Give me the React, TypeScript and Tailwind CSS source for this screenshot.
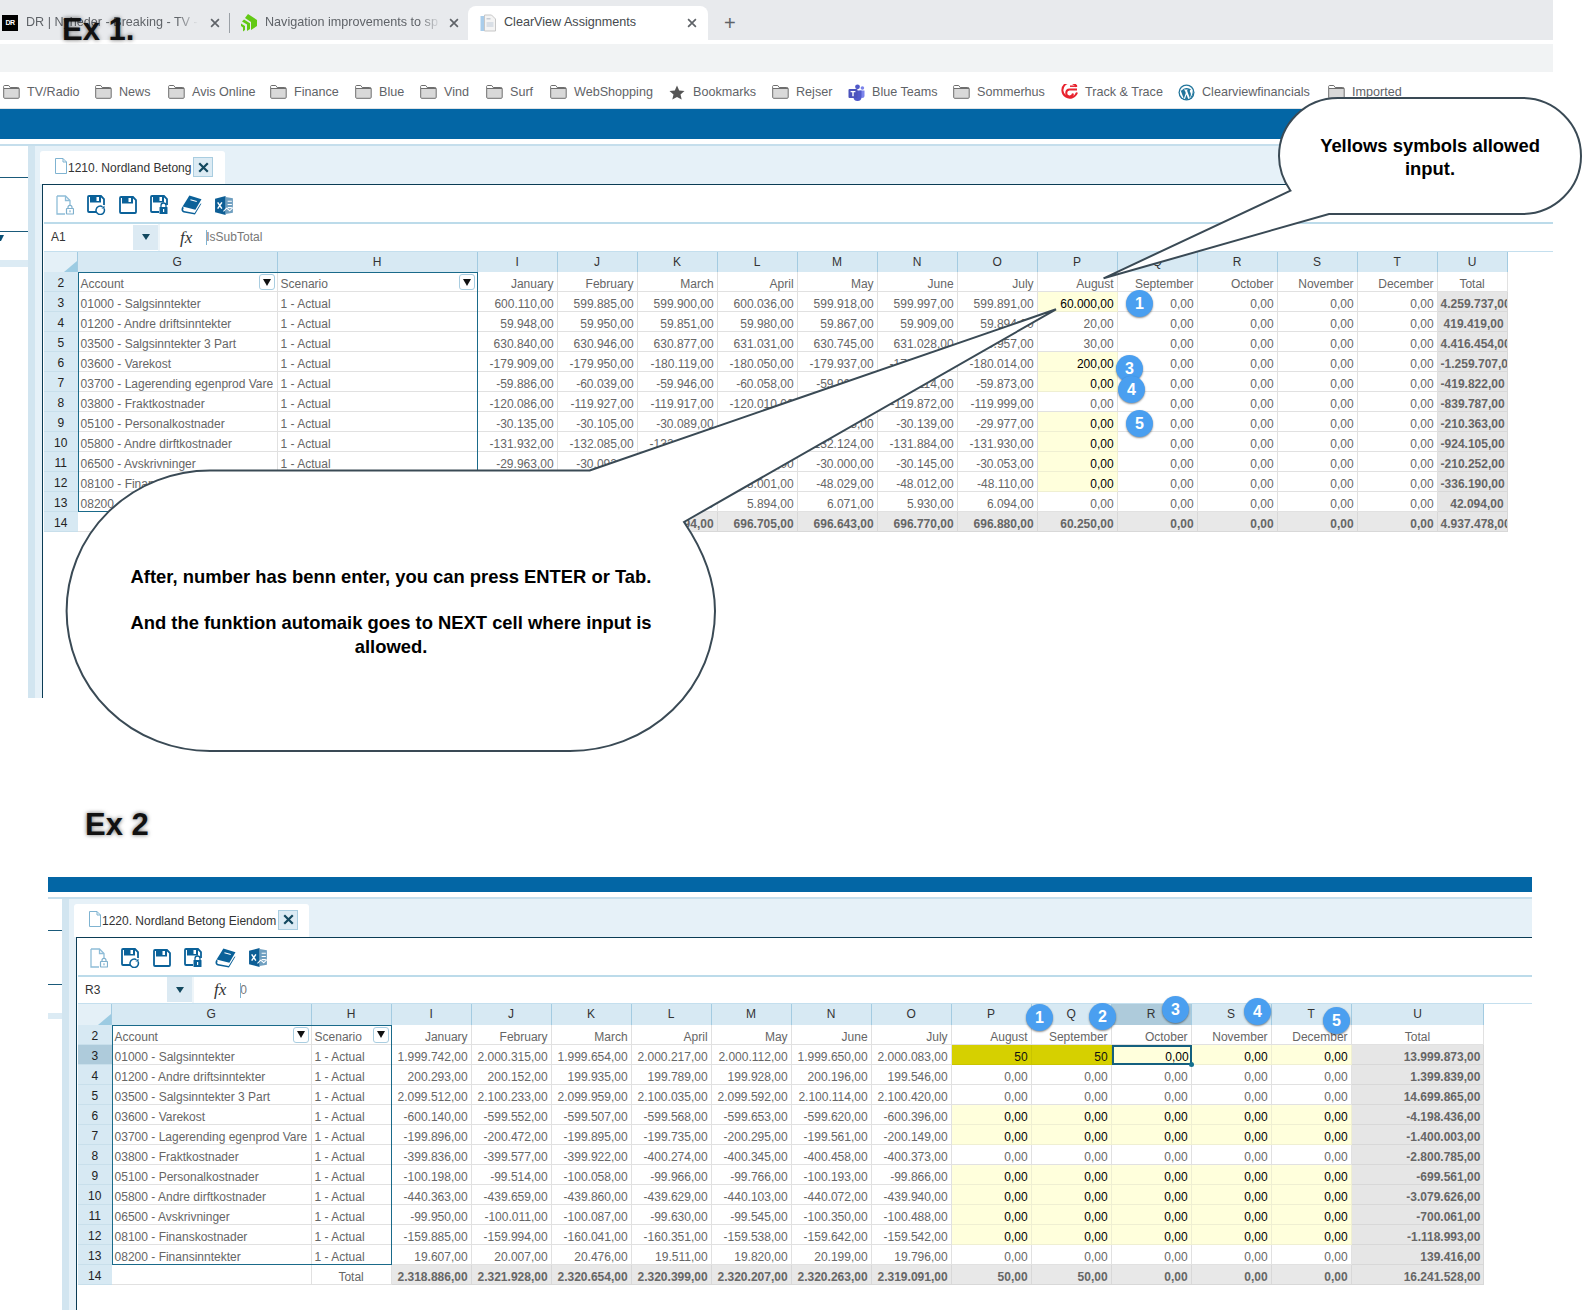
import React from "react";

const BLUE = "#0a6199";

function Folder() {
  return (
    <svg width="17" height="14" viewBox="0 0 17 14" className="shrink-0">
      <path d="M.7 1.5a1 1 0 0 1 1-1h4l1.5 2h7.6a1.4 1.4 0 0 1 1.4 1.4v8.4a1 1 0 0 1-1 1H1.7a1 1 0 0 1-1-1z" fill="#d9d9d9" stroke="#6e6e6e" strokeWidth="1" />
      <path d="M1 3.5h15" stroke="#6e6e6e" strokeWidth="1" />
      <path d="M1.2 1h4.4l1.2 2H1.2z" fill="#fff" />
    </svg>
  );
}
function Star() {
  return (
    <svg width="16" height="15" viewBox="0 0 16 15" className="shrink-0">
      <path d="M8 .5l2.2 4.9 5.3.5-4 3.5 1.2 5.2L8 11.9 3.3 14.6l1.2-5.2-4-3.5 5.3-.5z" fill="#555" />
    </svg>
  );
}
function Teams() {
  return (
    <svg width="17" height="17" viewBox="0 0 17 17" className="shrink-0">
      <circle cx="9.5" cy="2.8" r="2.4" fill="#5059c9" />
      <circle cx="14.4" cy="4" r="1.8" fill="#7b83eb" />
      <path d="M11.5 6.5h5v5a2.5 2.5 0 0 1-5 0z" fill="#7b83eb" />
      <path d="M5.5 6.5h8v6.5a3.6 3.6 0 0 1-8 0z" fill="#5059c9" />
      <rect x=".5" y="5" width="9" height="9" rx="1" fill="#4b53bc" />
      <path d="M2.6 7h4.8v1.2H5.700v4H4.300v-4H2.600z" fill="#fff" />
    </svg>
  );
}
function TrackIcon() {
  return (
    <svg width="17" height="17" viewBox="0 0 17 17" className="shrink-0" fill="none" stroke="#e8232f">
      <path d="M15.600 2.800A7.500 7.500 0 1 0 16 8.500" strokeWidth="2" />
      <path d="M16 5.600H8.500A3.400 3.400 0 1 0 12 9.500" strokeWidth="2" />
      <path d="M16 2.200H9" strokeWidth="1.500" />
    </svg>
  );
}
function WpIcon() {
  return (
    <svg width="17" height="17" viewBox="0 0 17 17" className="shrink-0">
      <circle cx="8.500" cy="8.500" r="8" fill="#21759b" />
      <circle cx="8.500" cy="8.500" r="6.700" fill="#fff" />
      <path d="M2.600 6.300l3.200 8.500 2-5.700-1-2.800h-.9v-.7h3.800v.7h-.8l3 8 .9-3c.5-1.600-.6-2.800-.9-3.700-.3-.8.200-1.800 1.300-1.800a6.500 6.500 0 0 0-9.600.8z" fill="#21759b" />
      <path d="M8.500 10.400l-1.700 5a6.500 6.500 0 0 0 3.500-.1zM14.300 5.700c.6 1.500.5 3.500-.4 5.300l-1.800 3.500a6.500 6.500 0 0 0 2.200-8.800z" fill="#21759b" />
    </svg>
  );
}
function GreenIcon() {
  return (
    <svg width="17" height="18" viewBox="0 0 17 18" className="shrink-0" fill="#62c914">
      <path d="M7 0l9 6v6l-6 4v-8L4 4z" />
      <path d="M3 5.500l6 3.700v5.800l-3 2v-6.500L1 7.500z" />
      <path d="M0 9.500l4 2.500v4l-2 1.500v-4L0 12z" />
    </svg>
  );
}
function CvIcon() {
  return (
    <svg width="17" height="18" viewBox="0 0 17 18" className="shrink-0">
      <rect x=".5" y="2" width="4" height="15" fill="#a9cdeb" />
      <path d="M4.500 1h7l4 4v12h-11z" fill="#f4f4f4" stroke="#c7c7c7" />
      <rect x="6.500" y="8" width="7" height="5" fill="#d9dfe6" />
      <rect x="6.500" y="4" width="4" height="1.500" fill="#c7ccd3" />
    </svg>
  );
}
function DocSmall() {
  return (
    <svg width="12" height="16" viewBox="0 0 12 16" className="shrink-0">
      <path d="M.5.500h7.500l3.500 3.500v11.500H.5z" fill="#fff" stroke="#7fb3d1" />
      <path d="M8 .5v3.500h3.500" fill="none" stroke="#7fb3d1" />
    </svg>
  );
}

function DocLockIcon() {
  return (
    <svg width="18" height="20" viewBox="0 0 18 20" fill="none">
      <path d="M1 1h8.500l4.500 4.500V11M9 19H1V1" stroke="#8fbdd8" strokeWidth="1.300" />
      <path d="M9.500 1v4.500H14" stroke="#8fbdd8" strokeWidth="1.300" />
      <path d="M12 13.500v-1.200a2 2 0 0 1 4 0v1.200" stroke="#7fb0cd" strokeWidth="1.200" />
      <rect x="10.500" y="13.500" width="7" height="5.500" rx=".5" stroke="#7fb0cd" strokeWidth="1.200" />
      <rect x="13.400" y="15.300" width="1.200" height="2" fill="#7fb0cd" />
    </svg>
  );
}
function Floppy({ cut }: { cut?: boolean }) {
  return (
    <>
      <path d={cut ? "M9 17H2a1 1 0 0 1-1-1V2a1 1 0 0 1 1-1h12l3 3v6" : "M2 1h12l3 3v12a1 1 0 0 1-1 1H2a1 1 0 0 1-1-1V2a1 1 0 0 1 1-1z"} stroke={BLUE} strokeWidth="1.800" fill="#fff" />
      <path d="M3 1h11v6.500H3z" fill={BLUE} />
      <rect x="9.500" y="2" width="2.500" height="4" fill="#fff" />
    </>
  );
}
function SaveIcon() {
  return (
    <svg width="18" height="18" viewBox="0 0 18 18" fill="none">
      <Floppy />
    </svg>
  );
}
function SaveReloadIcon() {
  return (
    <svg width="19" height="20" viewBox="0 0 19 20" fill="none">
      <Floppy cut />
      <path d="M17 13.500a4.200 4.200 0 1 1-1.500-1.700" stroke={BLUE} strokeWidth="1.500" />
      <path d="M17.500 10.500v3h-3z" fill={BLUE} />
    </svg>
  );
}
function SaveLockIcon() {
  return (
    <svg width="18" height="20" viewBox="0 0 18 20" fill="none">
      <Floppy cut />
      <path d="M11 12v-1.500a2.500 2.500 0 0 1 5 0V12" stroke={BLUE} strokeWidth="1.300" />
      <rect x="9.500" y="12" width="8" height="7" rx=".6" fill={BLUE} />
      <rect x="13" y="14" width="1.200" height="3" fill="#fff" />
    </svg>
  );
}
function BookIcon() {
  return (
    <svg width="21" height="20" viewBox="0 0 20 19" fill="none">
      <path d="M8 .5l11.500 3.500-5.800 10L1.500 11z" fill={BLUE} />
      <path d="M1.500 11c-1.700 2.300-1.300 5 1 5.600l10.800 2 6.200-10.600-1 .2-5.500 8.900-10-1.900c-1.200-.3-1.200-1.800-.3-2.900z" fill={BLUE} />
      <path d="M9 4.500l6 1.700" stroke="#fff" strokeWidth="1" />
    </svg>
  );
}
function ExcelIcon() {
  return (
    <svg width="19" height="21" viewBox="0 0 18 20" fill="none">
      <path d="M10 2l7 1v14l-7 1z" fill="#6f9fc0" />
      <path d="M0 3.500L10 1v18L0 16.500z" fill="#0d5e95" />
      <path d="M12 6h4M12 9h4M12 12h4" stroke="#fff" strokeWidth="1" />
      <path d="M2.500 7l4 6M6.500 7l-4 6" stroke="#fff" strokeWidth="1.400" />
      <path d="M8 15.500l3-3 3 2.500 3-3" stroke="#fff" strokeWidth="1" />
    </svg>
  );
}

function FilterBtn() {
  return (
    <span className="absolute right-[2px] top-[2px] flex h-4 w-4 items-center justify-center rounded-[3px] border border-[#a9cde0] bg-white">
      <svg width="8" height="7" viewBox="0 0 8 7">
        <path d="M0 0h8L4 7z" fill="#111" />
      </svg>
    </span>
  );
}

function CloseX({ tone, size = 10, weight = 1.5 }: { tone: string; size?: number; weight?: number }) {
  return (
    <svg width={size} height={size} viewBox="0 0 9 9" className="shrink-0">
      <path d="M1 1l7 7M8 1L1 8" stroke={tone} strokeWidth={weight} />
    </svg>
  );
}

type Col = { l: string; w: string };
type Row = { n: number; a: string; s: string; v: string[]; t: string };

const ACT = "1 - Actual";
const COLS1: Col[] = [
  { l: "G", w: "w-[200px]" },
  { l: "H", w: "w-[200px]" },
  ...["I", "J", "K", "L", "M", "N", "O", "P", "Q", "R", "S", "T"].map((l) => ({ l, w: "w-[80px]" })),
  { l: "U", w: "w-[70px]" },
];
const COLS2: Col[] = [
  { l: "G", w: "w-[200px]" },
  { l: "H", w: "w-[80px]" },
  ...["I", "J", "K", "L", "M", "N", "O", "P", "Q", "R", "S", "T"].map((l) => ({ l, w: "w-[80px]" })),
  { l: "U", w: "w-[132.800px]" },
];
const MONTHS = ["January", "February", "March", "April", "May", "June", "July", "August", "September", "October", "November", "December"];

const Z = ["0,00", "0,00", "0,00", "0,00"];
const Z5 = ["0,00", "0,00", "0,00", "0,00", "0,00"];

const ROWS1: Row[] = [
  { n: 3, a: "01000 - Salgsinntekter", s: ACT, v: ["600.110,00", "599.885,00", "599.900,00", "600.036,00", "599.918,00", "599.997,00", "599.891,00", "60.000,00", ...Z], t: "4.259.737,00" },
  { n: 4, a: "01200 - Andre driftsinntekter", s: ACT, v: ["59.948,00", "59.950,00", "59.851,00", "59.980,00", "59.867,00", "59.909,00", "59.894,00", "20,00", ...Z], t: "419.419,00" },
  { n: 5, a: "03500 - Salgsinntekter 3 Part", s: ACT, v: ["630.840,00", "630.946,00", "630.877,00", "631.031,00", "630.745,00", "631.028,00", "630.957,00", "30,00", ...Z], t: "4.416.454,00" },
  { n: 6, a: "03600 - Varekost", s: ACT, v: ["-179.909,00", "-179.950,00", "-180.119,00", "-180.050,00", "-179.937,00", "-179.728,00", "-180.014,00", "200,00", ...Z], t: "-1.259.707,00" },
  { n: 7, a: "03700 - Lagerending egenprod Vare", s: ACT, v: ["-59.886,00", "-60.039,00", "-59.946,00", "-60.058,00", "-59.906,00", "-60.114,00", "-59.873,00", "0,00", ...Z], t: "-419.822,00" },
  { n: 8, a: "03800 - Fraktkostnader", s: ACT, v: ["-120.086,00", "-119.927,00", "-119.917,00", "-120.010,00", "-119.976,00", "-119.872,00", "-119.999,00", "0,00", ...Z], t: "-839.787,00" },
  { n: 9, a: "05100 - Personalkostnader", s: ACT, v: ["-30.135,00", "-30.105,00", "-30.089,00", "-29.985,00", "-29.933,00", "-30.139,00", "-29.977,00", "0,00", ...Z], t: "-210.363,00" },
  { n: 10, a: "05800 - Andre dirftkostnader", s: ACT, v: ["-131.932,00", "-132.085,00", "-132.120,00", "-132.030,00", "-132.124,00", "-131.884,00", "-131.930,00", "0,00", ...Z], t: "-924.105,00" },
  { n: 11, a: "06500 - Avskrivninger", s: ACT, v: ["-29.963,00", "-30.092,00", "-29.999,00", "-30.000,00", "-30.000,00", "-30.145,00", "-30.053,00", "0,00", ...Z], t: "-210.252,00" },
  { n: 12, a: "08100 - Finanskostnader", s: ACT, v: ["-47.900,00", "-48.050,00", "-48.098,00", "-48.001,00", "-48.029,00", "-48.012,00", "-48.110,00", "0,00", ...Z], t: "-336.190,00" },
  { n: 13, a: "08200 - Finansinntekter", s: ACT, v: ["6.010,00", "5.990,00", "6.105,00", "5.894,00", "6.071,00", "5.930,00", "6.094,00", "0,00", ...Z], t: "42.094,00" },
];
const TOTAL1 = ["696.420,00", "696.512,00", "696.694,00", "696.705,00", "696.643,00", "696.770,00", "696.880,00", "60.250,00", "0,00", "0,00", "0,00", "0,00"];

const r2 = (n: number, a: string, v: string[], t: string): Row => ({ n, a, s: ACT, v: [...v.map((x) => x + ",00"), ...Z5], t: t + ",00" });
const ROWS2: Row[] = [
  { n: 3, a: "01000 - Salgsinntekter", s: ACT, v: ["1.999.742,00", "2.000.315,00", "1.999.654,00", "2.000.217,00", "2.000.112,00", "1.999.650,00", "2.000.083,00", "50", "50", "0,00", "0,00", "0,00"], t: "13.999.873,00" },
  r2(4, "01200 - Andre driftsinntekter", ["200.293", "200.152", "199.935", "199.789", "199.928", "200.196", "199.546"], "1.399.839"),
  r2(5, "03500 - Salgsinntekter 3 Part", ["2.099.512", "2.100.233", "2.099.959", "2.100.035", "2.099.592", "2.100.114", "2.100.420"], "14.699.865"),
  r2(6, "03600 - Varekost", ["-600.140", "-599.552", "-599.507", "-599.568", "-599.653", "-599.620", "-600.396"], "-4.198.436"),
  r2(7, "03700 - Lagerending egenprod Vare", ["-199.896", "-200.472", "-199.895", "-199.735", "-200.295", "-199.561", "-200.149"], "-1.400.003"),
  r2(8, "03800 - Fraktkostnader", ["-399.836", "-399.577", "-399.922", "-400.274", "-400.345", "-400.458", "-400.373"], "-2.800.785"),
  r2(9, "05100 - Personalkostnader", ["-100.198", "-99.514", "-100.058", "-99.966", "-99.766", "-100.193", "-99.866"], "-699.561"),
  r2(10, "05800 - Andre dirftkostnader", ["-440.363", "-439.659", "-439.860", "-439.629", "-440.103", "-440.072", "-439.940"], "-3.079.626"),
  r2(11, "06500 - Avskrivninger", ["-99.950", "-100.011", "-100.087", "-99.630", "-99.545", "-100.350", "-100.488"], "-700.061"),
  r2(12, "08100 - Finanskostnader", ["-159.885", "-159.994", "-160.041", "-160.351", "-159.538", "-159.642", "-159.542"], "-1.118.993"),
  r2(13, "08200 - Finansinntekter", ["19.607", "20.007", "20.476", "19.511", "19.820", "20.199", "19.796"], "139.416"),
];
const TOTAL2 = ["2.318.886,00", "2.321.928,00", "2.320.654,00", "2.320.399,00", "2.320.207,00", "2.320.263,00", "2.319.091,00", "50,00", "50,00", "0,00", "0,00", "0,00"];

const YELLOW_ROWS = [3, 6, 7, 9, 10, 11, 12];
const CELL = "h-5 shrink-0 overflow-hidden whitespace-nowrap border-r border-b px-[3px] leading-[24px] box-border";

function Grid({ cols, rows, total, yellowCols, selected, frameW, hTotal, grandTotal }: {
  cols: Col[]; rows: Row[]; total: string[]; yellowCols: number[]; selected?: boolean; frameW: string; hTotal?: boolean; grandTotal: string;
}) {
  const rowHead = "flex h-5 w-[33.600px] shrink-0 items-start justify-center pt-[2px] leading-[18px] text-[#222] border-b border-[#c8dfeb]";
  return (
    <div className="relative text-[12px] text-[#666]">
      <div className="flex h-[20.500px]">
        <div className="relative w-[33.600px] shrink-0 border-r border-[#a3cbe1] bg-[#e4f0f7]">
          <svg width="13" height="11" viewBox="0 0 13 11" className="absolute right-0 bottom-0">
            <path d="M13 0v11H0z" fill="#9ccbe2" />
          </svg>
        </div>
        {cols.map((c) => (
          <div key={c.l} className={`${c.w} flex shrink-0 items-center justify-center border-r border-[#a3cbe1] text-[#333] ${selected && c.l === "R" ? "bg-[#aecbdb]" : "bg-[#d7e9f3]"}`}>
            {c.l}
          </div>
        ))}
      </div>
      <div className="flex h-5">
        <div className={`${rowHead} bg-[#d7e9f3]`}>2</div>
        <div className={`${CELL} ${cols[0].w} relative border-[#e1e1e1]`}>Account<FilterBtn /></div>
        <div className={`${CELL} ${cols[1].w} relative border-[#e1e1e1]`}>Scenario<FilterBtn /></div>
        {MONTHS.map((m) => (
          <div key={m} className={`${CELL} w-[80px] border-[#e1e1e1] text-right`}>{m}</div>
        ))}
        <div className={`${CELL} ${cols[14].w} border-[#e1e1e1] text-center`}>Total</div>
      </div>
      {rows.map((r) => (
        <div key={r.n} className="flex h-5">
          <div className={`${rowHead} ${selected && r.n === 3 ? "bg-[#aecbdb]" : "bg-[#d7e9f3]"}`}>{r.n}</div>
          <div className={`${CELL} ${cols[0].w} border-[#e1e1e1]`}>{r.a}</div>
          <div className={`${CELL} ${cols[1].w} border-[#e1e1e1]`}>{r.s}</div>
          {r.v.map((x, i) => {
            const y = YELLOW_ROWS.includes(r.n) && yellowCols.includes(i);
            const strong = selected && r.n === 3 && (i === 7 || i === 8);
            const sel = selected && r.n === 3 && i === 9;
            if (sel) {
              return (
                <div key={i} className="relative h-5 w-[80px] shrink-0 border-2 border-[#14607f] bg-[#ffffdc] pr-[1px] text-right leading-[21px] text-black">
                  {x}
                  <span className="absolute -right-[4px] -bottom-[4px] h-[5px] w-[5px] rounded-full bg-[#14708f]" />
                </div>
              );
            }
            return (
              <div key={i} className={`${CELL} w-[80px] text-right ${strong ? "border-[#c9c400] bg-[#d6d000] text-[#111]" : y ? "border-[#efefd2] bg-[#ffffdc] text-black" : "border-[#e1e1e1]"}`}>
                {x}
              </div>
            );
          })}
          <div className={`${CELL} ${cols[14].w} border-[#d8d8d8] bg-[#e6e6e6] text-right font-bold`}>{r.t}</div>
        </div>
      ))}
      <div className="flex h-5">
        <div className={`${rowHead} bg-[#d7e9f3]`}>14</div>
        <div className={`${CELL} ${cols[0].w} border-[#e1e1e1]`} />
        <div className={`${CELL} ${cols[1].w} border-[#e1e1e1] text-center`}>{hTotal ? "Total" : ""}</div>
        {total.map((x, i) => (
          <div key={i} className={`${CELL} w-[80px] border-[#d8d8d8] bg-[#e8e8e8] text-right font-bold`}>{x}</div>
        ))}
        <div className={`${CELL} ${cols[14].w} border-[#d8d8d8] bg-[#e6e6e6] text-right font-bold`}>{grandTotal}</div>
      </div>
      <div className={`pointer-events-none absolute left-[33.600px] top-[20.500px] h-[240px] ${frameW} border border-[#1a6a8a]`} />
    </div>
  );
}

function Sheet({ railW, title, tabW, nameBox, formula, blueH, bodyH, cols, rows, total, yellowCols, selected, frameW, hTotal, grandTotal, arrowBit }: {
  railW: string; title: string; tabW: string; nameBox: string; formula: string; blueH: string; bodyH: string; cols: Col[]; rows: Row[]; total: string[]; yellowCols: number[]; selected?: boolean; frameW: string; hTotal?: boolean; grandTotal: string; arrowBit?: boolean;
}) {
  return (
    <section>
      <div className={`${blueH} bg-[#0366a5]`} />
      <div className="mt-[5px] h-[2px] bg-[#c5deec]" />
      <div className={`flex ${bodyH} overflow-hidden`}>
        <div className={`${railW} relative shrink-0`}>
          <div className="mt-[31px] h-px bg-[#1a5a7a]" />
          <div className="mt-[53px] h-px bg-[#1a5a7a]" />
          {arrowBit && (
            <svg width="4" height="6" viewBox="0 0 4 6" className="absolute left-0 top-[89px]">
              <path d="M0 0h4L1 6H0z" fill="#0a4f74" />
            </svg>
          )}
          <div className="mt-[28px] h-[6.500px] bg-[#dcebf4]" />
        </div>
        <div className="w-[7px] shrink-0 bg-[#d2e5f0]" />
        <div className="w-[7px] shrink-0 bg-[#e6f1f8]" />
        <div className="flex min-w-0 flex-1 flex-col">
          <div className="flex h-[38px] items-end bg-[#e6f1f8]">
            <div className={`${tabW} -ml-[2px] flex h-[33px] items-start rounded-t-[3px] bg-white pl-[15px] pt-[6px] text-[12px] text-[#333]`}>
              <span className="mt-[1px]"><DocSmall /></span>
              <span className="ml-[1px] mt-[1px] leading-[20px] whitespace-nowrap">{title}</span>
              <span className="ml-[2px] flex h-5 w-[20px] items-center justify-center border border-[#a9cde0] bg-[#dcebf4]">
                <CloseX tone="#12485f" size={11} weight={1.8} />
              </span>
            </div>
          </div>
          <div className="min-h-0 flex-1 border-t border-l border-[#0b3c55] pl-px">
            <div className="flex h-[37px] items-center gap-[13px] pl-[12px] pt-[3px]">
              <DocLockIcon />
              <SaveReloadIcon />
              <SaveIcon />
              <SaveLockIcon />
              <BookIcon />
              <ExcelIcon />
            </div>
            <div className="h-[2px] bg-[#bcdbea]" />
            <div className="flex h-[27.500px] items-stretch border-b border-[#c4dfee] text-[12px]">
              <div className="flex w-[116px] shrink-0 items-center border-r-2 border-[#eef5f9] pl-[7px] text-[#333]">
                <span className="flex-1">{nameBox}</span>
                <span className="flex h-[25px] w-[25px] items-center justify-center bg-[#dceaf3]">
                  <svg width="8" height="6" viewBox="0 0 8 6"><path d="M0 0h8L4 6z" fill="#12485f" /></svg>
                </span>
              </div>
              <span className="ml-[20px] flex items-center text-[17px] italic leading-none text-[#333] [font-family:'Liberation_Serif',serif]">fx</span>
              <span className="relative ml-[14px] flex items-center text-[#777]">
                <span className="absolute left-0 top-[6px] h-[15px] w-px bg-[#7fb3d1]" />
                {formula}
              </span>
            </div>
            <Grid cols={cols} rows={rows} total={total} yellowCols={yellowCols} selected={selected} frameW={frameW} hTotal={hTotal} grandTotal={grandTotal} />
          </div>
        </div>
      </div>
    </section>
  );
}

const MARKS: { n: number; c: string }[] = [
  { n: 1, c: "left-[1126px] top-[290px]" },
  { n: 3, c: "left-[1116px] top-[355px]" },
  { n: 4, c: "left-[1118px] top-[376px]" },
  { n: 5, c: "left-[1126px] top-[410px]" },
  { n: 1, c: "left-[1026px] top-[1004px]" },
  { n: 2, c: "left-[1089px] top-[1003px]" },
  { n: 3, c: "left-[1162px] top-[996px]" },
  { n: 4, c: "left-[1244px] top-[998px]" },
  { n: 5, c: "left-[1323px] top-[1007px]" },
];

const BOOKMARKS: { t: string; w: string; i: React.ReactNode }[] = [
  { t: "TV/Radio", w: "w-[92px]", i: <Folder /> },
  { t: "News", w: "w-[73px]", i: <Folder /> },
  { t: "Avis Online", w: "w-[102px]", i: <Folder /> },
  { t: "Finance", w: "w-[85px]", i: <Folder /> },
  { t: "Blue", w: "w-[65px]", i: <Folder /> },
  { t: "Vind", w: "w-[66px]", i: <Folder /> },
  { t: "Surf", w: "w-[64px]", i: <Folder /> },
  { t: "WebShopping", w: "w-[119px]", i: <Folder /> },
  { t: "Bookmarks", w: "w-[103px]", i: <Star /> },
  { t: "Rejser", w: "w-[76px]", i: <Folder /> },
  { t: "Blue Teams", w: "w-[105px]", i: <Teams /> },
  { t: "Sommerhus", w: "w-[108px]", i: <Folder /> },
  { t: "Track & Trace", w: "w-[117px]", i: <TrackIcon /> },
  { t: "Clearviewfinancials", w: "w-[150px]", i: <WpIcon /> },
  { t: "Imported", w: "w-[80px]", i: <Folder /> },
];

export default function App() {
  return (
    <div className="relative h-[1310px] w-[1583px] overflow-hidden bg-white [font-family:'Liberation_Sans',Arial,sans-serif]">
      <div className="w-[1553px]">
        <div className="flex h-10 items-end bg-[#e8eaed] text-[12.600px] text-[#5f6368]">
          <div className="flex h-[34px] w-[229px] items-center pb-[1px]">
            <span className="ml-[2px] flex h-4 w-4 shrink-0 items-center justify-center bg-black text-[7px] font-bold leading-none tracking-[-0.5px] text-white">DR</span>
            <span className="ml-2 w-[172px] overflow-hidden whitespace-nowrap [mask-image:linear-gradient(to_right,#000_88%,transparent)]">DR | Nyheder - Breaking - TV -</span>
            <span className="ml-[12px]"><CloseX tone="#5f6368" /></span>
          </div>
          <div className="mb-[7px] h-[20px] w-px bg-[#9aa0a6]" />
          <div className="flex h-[34px] w-[238px] items-center pb-[1px]">
            <span className="ml-[11px]"><GreenIcon /></span>
            <span className="ml-[7px] w-[176px] overflow-hidden whitespace-nowrap [mask-image:linear-gradient(to_right,#000_88%,transparent)]">Navigation improvements to sp</span>
            <span className="ml-[8px]"><CloseX tone="#5f6368" /></span>
          </div>
          <div className="flex h-[34px] w-[240px] items-center rounded-t-[8px] bg-white pb-[1px] text-[#45494d]">
            <span className="ml-[12px]"><CvIcon /></span>
            <span className="ml-[7px] w-[179px] whitespace-nowrap">ClearView Assignments</span>
            <span className="ml-[4px]"><CloseX tone="#5f6368" /></span>
          </div>
          <span className="mb-[5px] ml-[16px] text-[20px] leading-[24px] text-[#5f6368]">+</span>
        </div>
        <div className="mt-1 h-7 bg-[#f1f3f4]" />
        <div className="flex h-[36.500px] items-start overflow-hidden border-b border-[#dfe3e6] pl-[3px] pt-[11px] text-[12.600px] text-[#5f6368]">
          {BOOKMARKS.map((b) => (
            <div key={b.t} className={`${b.w} flex h-[18px] shrink-0 items-center gap-[8px] whitespace-nowrap`}>
              <span className="flex w-4 justify-center">{b.i}</span>
              <span>{b.t}</span>
            </div>
          ))}
        </div>
        <Sheet railW="w-[28px]" title="1210. Nordland Betong" tabW="w-[185px]" nameBox="A1" formula="IsSubTotal" blueH="h-[30.500px]" bodyH="h-[551.500px]" cols={COLS1} rows={ROWS1} total={TOTAL1} yellowCols={[7]} frameW="w-[400px]" grandTotal="4.937.478,00" arrowBit />
      </div>
      <div className="flex h-[179px] items-start pl-[85px] pt-[109px]">
        <h2 className="text-[31px] font-bold leading-[36px] text-[#111] [text-shadow:0_0_4px_rgba(0,0,0,0.6)]">Ex 2</h2>
      </div>
      <div className="ml-[48px] w-[1484px]">
        <Sheet railW="w-[14px]" title="1220. Nordland Betong Eiendom" tabW="w-[235px]" nameBox="R3" formula="0" blueH="h-[15px]" bodyH="h-[411px]" cols={COLS2} rows={ROWS2} total={TOTAL2} yellowCols={[7, 8, 9, 10, 11]} selected frameW="w-[280px]" hTotal grandTotal="16.241.528,00" />
      </div>

      <h2 className="absolute left-[62px] top-[12px] text-[31px] font-bold leading-[36px] text-[#111] [text-shadow:0_0_4px_rgba(0,0,0,0.6)]">Ex 1.</h2>

      <svg width="1583" height="760" viewBox="0 0 1583 760" className="pointer-events-none absolute left-0 top-0" fill="#fff" stroke="#3a4a55" strokeWidth="2">
        <path d="M1329 214L1522 214A59 58 0 0 0 1581 156A59 58 0 0 0 1522 98L1338 98A59 58 0 0 0 1279 156C1279 170 1283 180 1290.500 190.700L1103.600 278.300Z" />
        <path d="M589.600 470.500L1056 309.300L684 522C703 550 715 580 715 611A145 140 0 0 1 570 751L210 751A143.400 140 0 0 1 66.600 611A143.400 140.500 0 0 1 210 470.500Z" />
      </svg>
      <div className="absolute left-[1280px] top-[134px] w-[300px] text-center text-[18.400px] font-bold leading-[23.200px] text-black">
        Yellows symbols allowed<br />input.
      </div>
      <div className="absolute left-[91px] top-[565px] w-[600px] text-center text-[18.400px] font-bold leading-[23.200px] text-black">
        After, number has benn enter, you can press ENTER or Tab.<br /><br />And the funktion automaik goes to NEXT cell where input is<br />allowed.
      </div>
      {MARKS.map((m, i) => (
        <span key={i} className={`absolute ${m.c} flex h-[27px] w-[27px] items-center justify-center rounded-full bg-[#4a9ff0] text-[16px] font-bold text-white shadow-[0_1px_2px_rgba(0,0,0,0.45)]`}>
          {m.n}
        </span>
      ))}
    </div>
  );
}
